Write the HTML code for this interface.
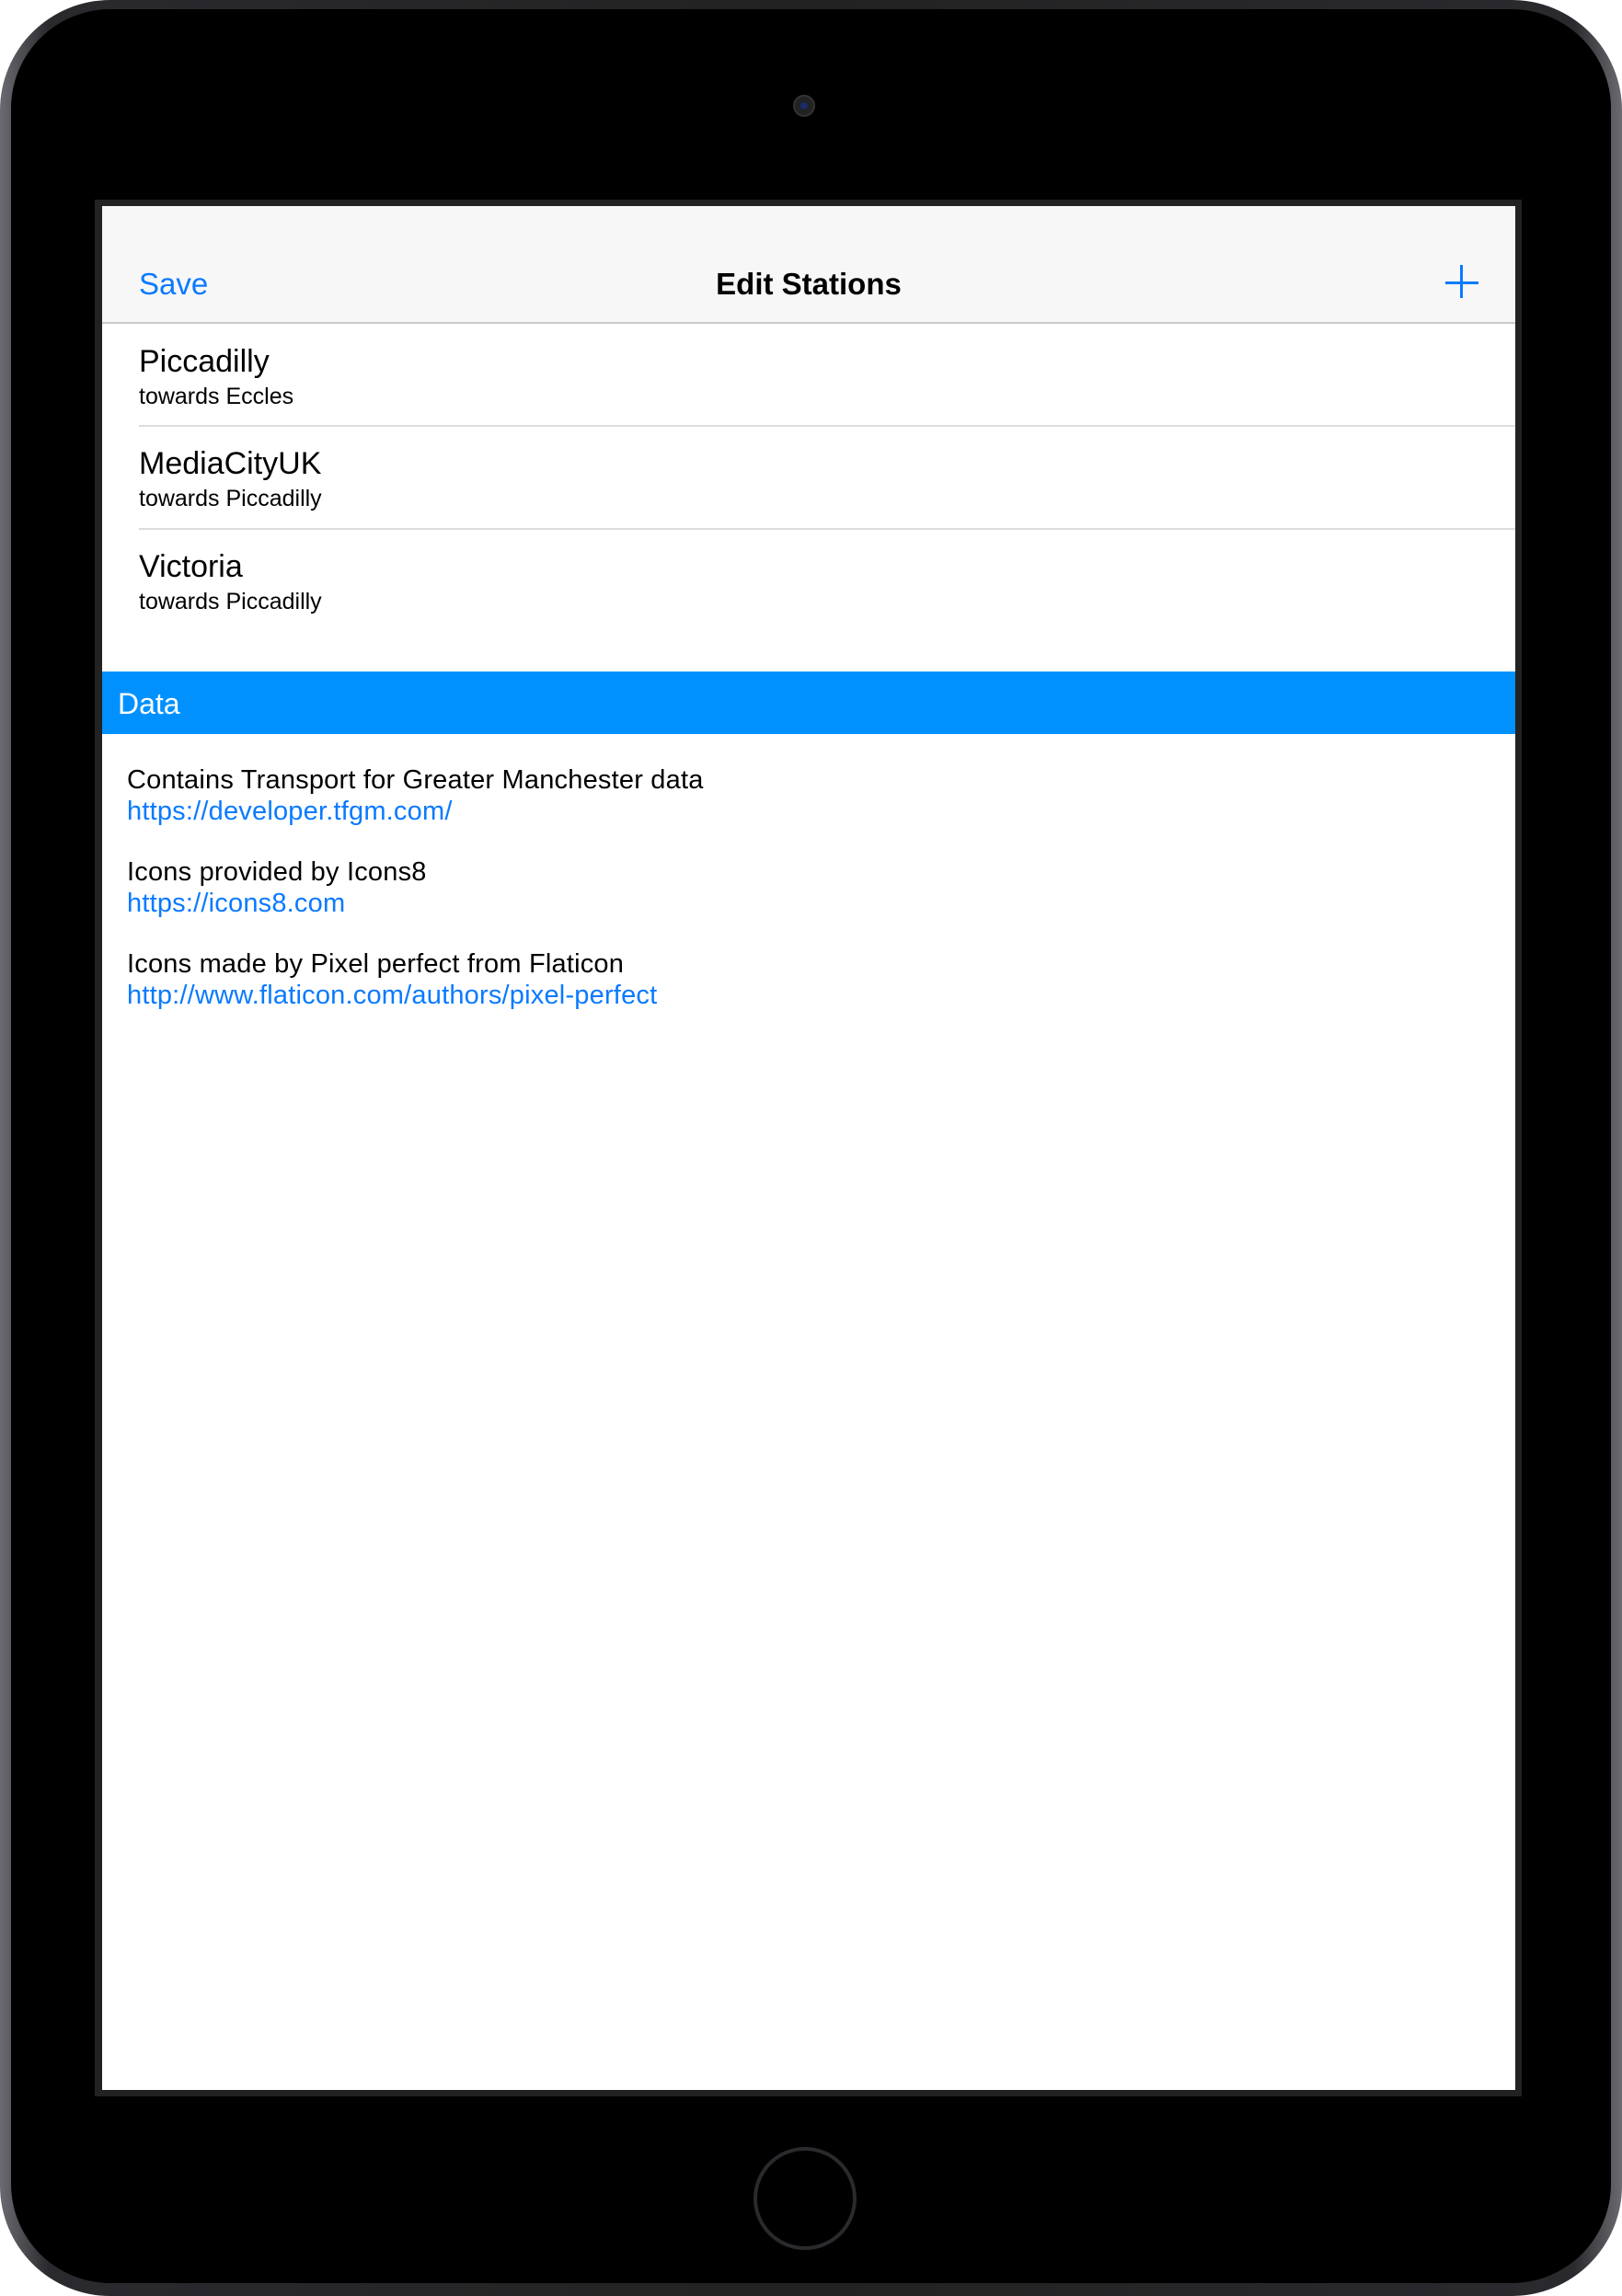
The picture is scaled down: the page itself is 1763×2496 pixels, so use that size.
<!DOCTYPE html>
<html><head><meta charset="utf-8"><style>
*{margin:0;padding:0;box-sizing:border-box}
body{width:1763px;height:2496px;background:#fff;position:relative;overflow:hidden;font-family:"Liberation Sans",sans-serif}
.dev{position:absolute;left:0;top:0;width:1763px;height:2496px;border-radius:120px;background:linear-gradient(90deg,#6a6a70 0%,#2a2a2e 3%,#222 50%,#2a2a2e 97%,#6a6a70 100%)}
.inner{position:absolute;left:12px;top:10px;right:12px;bottom:14px;border-radius:108px;background:#000}
.frame{position:absolute;left:103px;top:217px;width:1551px;height:2062px;background:#222}
.screen{position:absolute;left:111px;top:224px;width:1536px;height:2048px;background:#fff;overflow:hidden}
.nav{position:absolute;left:0;top:0;width:1536px;height:128px;background:#f7f7f7;border-bottom:2px solid #c8c8c8}
.t{position:absolute;white-space:nowrap;line-height:1}
.blue{color:#0a7aff}
.sep{position:absolute;left:40px;right:0;height:2px;background:#dcdcdc}
.data{position:absolute;left:0;top:506px;width:1536px;height:68px;background:#0091ff}
.c{font-size:29px;letter-spacing:0.2px}
</style></head><body>
<div class="dev"><div class="inner"></div></div>
<div style="position:absolute;left:862px;top:103px;width:24px;height:24px;border-radius:50%;background:#222;border:2px solid #333"><div style="position:absolute;left:6px;top:6px;width:8px;height:8px;border-radius:50%;background:#1a2a6a"></div></div>
<div style="position:absolute;left:819px;top:2334px;width:112px;height:112px;border-radius:50%;border:4px solid #2a2a2e"></div>
<div class="frame"></div>
<div class="screen">
 <div class="nav">
  <div class="t blue" style="left:40px;top:68px;font-size:33px">Save</div>
  <div class="t" style="left:0;width:1536px;text-align:center;top:68px;font-size:33px;font-weight:bold;color:#000">Edit Stations</div>
  <div style="position:absolute;left:1460px;top:82px;width:36px;height:3px;background:#0a7aff"></div>
  <div style="position:absolute;left:1476px;top:64px;width:3px;height:36px;background:#0a7aff"></div>
 </div>
 <div class="t" style="left:40px;top:152px;font-size:34px">Piccadilly</div>
 <div class="t" style="left:40px;top:195px;font-size:25px">towards Eccles</div>
 <div class="sep" style="top:238px"></div>
 <div class="t" style="left:40px;top:263px;font-size:34px">MediaCityUK</div>
 <div class="t" style="left:40px;top:306px;font-size:25px">towards Piccadilly</div>
 <div class="sep" style="top:350px"></div>
 <div class="t" style="left:40px;top:375px;font-size:34px">Victoria</div>
 <div class="t" style="left:40px;top:418px;font-size:25px">towards Piccadilly</div>
 <div class="data"><div class="t" style="left:17px;top:19px;font-size:32px;color:#fff">Data</div></div>
 <div class="t c" style="left:27px;top:610px">Contains Transport for Greater Manchester data</div>
 <div class="t c blue" style="left:27px;top:644px">https://developer.tfgm.com/</div>
 <div class="t c" style="left:27px;top:710px">Icons provided by Icons8</div>
 <div class="t c blue" style="left:27px;top:744px">https://icons8.com</div>
 <div class="t c" style="left:27px;top:810px">Icons made by Pixel perfect from Flaticon</div>
 <div class="t c blue" style="left:27px;top:844px">http://www.flaticon.com/authors/pixel-perfect</div>
</div>
</body></html>
